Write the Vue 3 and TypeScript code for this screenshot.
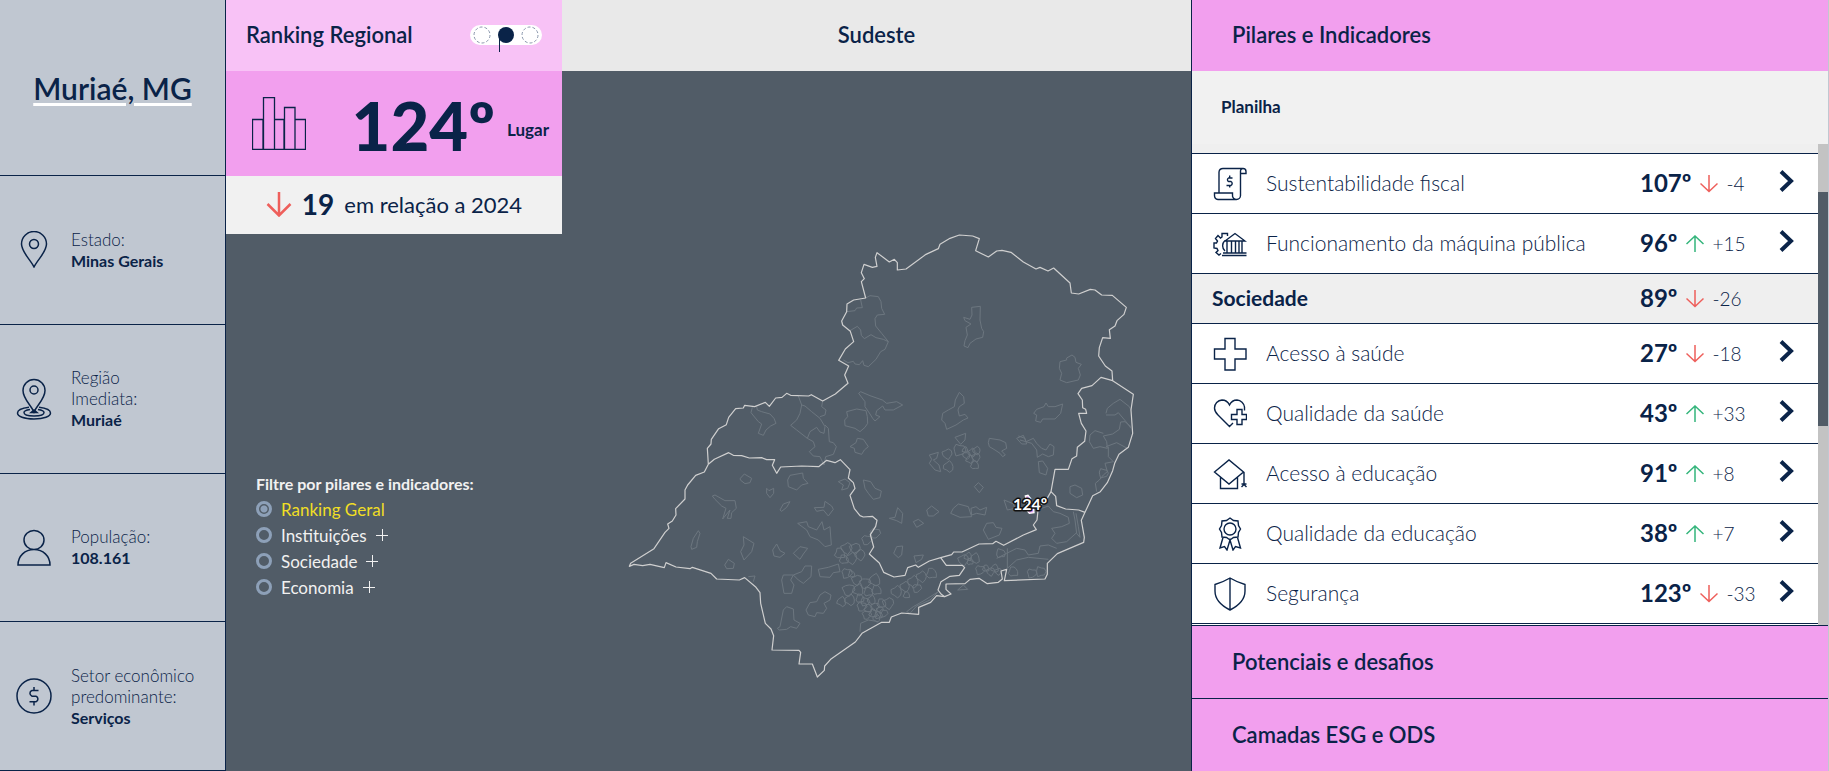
<script setup lang="ts">
import { ref } from 'vue'

interface Fact { icon: string; label: string; value: string }
interface Row { icon: string; label: string; rank: string; delta: number; group?: boolean }

const facts: Fact[] = [
  { icon: 'pin', label: 'Estado:', value: 'Minas Gerais' },
  { icon: 'region', label: 'Região\nImediata:', value: 'Muriaé' },
  { icon: 'person', label: 'População:', value: '108.161' },
  { icon: 'money', label: 'Setor econômico\npredominante:', value: 'Serviços' },
]

const rows: Row[] = [
  { icon: 'scroll', label: 'Sustentabilidade fiscal', rank: '107º', delta: -4 },
  { icon: 'machine', label: 'Funcionamento da máquina pública', rank: '96º', delta: 15 },
  { icon: '', label: 'Sociedade', rank: '89º', delta: -26, group: true },
  { icon: 'cross', label: 'Acesso à saúde', rank: '27º', delta: -18 },
  { icon: 'heart', label: 'Qualidade da saúde', rank: '43º', delta: 33 },
  { icon: 'cap', label: 'Acesso à educação', rank: '91º', delta: 8 },
  { icon: 'ribbon', label: 'Qualidade da educação', rank: '38º', delta: 7 },
  { icon: 'shield', label: 'Segurança', rank: '123º', delta: -33 },
]

const iconPaths: Record<string, string> = {
  pin: 'M18 36C14 28 5.500 21 5.500 13A12.500 12.500 0 0 1 30.500 13C30.500 21 22 28 18 36ZM18 8.500A4.500 4.500 0 1 0 18 17.500A4.500 4.500 0 1 0 18 8.500Z',
  person: 'M18 1.500A10 9.500 0 1 0 18 20.500A10 9.500 0 1 0 18 1.500ZM2 36C2 27 9 20.500 18 20.500S34 27 34 36Z',
  money: 'M18 1A17 17 0 1 0 18 35A17 17 0 1 0 18 1ZM22.500 12.500H16A3 3 0 0 0 16 18.200H20A3 3 0 0 1 20 23.800H13.500M18 9V12.500M18 23.800V27.500',
  scroll: 'M6 25.500V5A4 4 0 0 1 10 1.500H30A3 3 0 0 1 33 4.500V6.500H28M30 1.500A2.500 2.500 0 0 0 27.500 4V28.500A4 4 0 0 1 23.500 32.500H5A4 4 0 0 1 1.500 28.500V26H19.500V28A4 4 0 0 0 23.500 32.500M19.500 11H15.500A2 2 0 0 0 15.500 14.500H18A2.300 2.300 0 0 1 18 18.500H13.500M16.700 8.500V11M16.700 18.500V20.500',
  machine: 'M12 14L22 6.500L32 14ZM14 14V25.500M18.500 14V25.500M22.500 14V25.500M26 14V25.500M29 14V25.500M10 26H33.500M9 28.500H33.500M12 24A7 7 0 0 1 12 13.500M14.500 9V6.500H9V10L7.500 11L5 8.500L2.500 11.500L4.500 14L3.500 16H1V21L4 21.500L5 23.500L3 25.500L6 28L8 26.500',
  cross: 'M12 1.500H22V12H33V22H22V33H12V22H1.500V12H12Z',
  heart: 'M31.500 13.500V10A8 8 0 0 0 24 3C20.500 3 18 5 16.500 8C15 5 12.500 3 9 3A8 8 0 0 0 1.500 11C1.500 14 3 16 5 18L16.500 29.500L20 26M24 12.500H29V17.500H33.500V22.500H29V27.500H24V22.500H18.500V17.500H24Z',
  cap: 'M1.500 15L16 3L30.500 15L16 27ZM7.500 20V31.500H24.500V20M31 15V28M28.500 30L31 27.500L33.500 30M28.500 27H33.500',
  ribbon: 'M17 1L20.500 3.500L25 4L25.500 8.500L27.500 12L25.500 15.500L25 20L20.500 20.500L17 23L13.500 20.500L9 20L8.500 15.500L6.500 12L8.500 8.500L9 4L13.500 3.500ZM17 6A6 6 0 1 0 17 18A6 6 0 1 0 17 6ZM10 20.500L7 31L11.500 29.500L14 33L17 23L20 33L22.500 29.500L27.500 31L24.500 20.500',
  shield: 'M17 1C12 4 7 6 2 7.500V14C2 23 9 29 17 33C25 29 32 23 32 14V7.500C27 6 22 4 17 1ZM17 1V33',
}

const filters = [
  { name: 'Ranking Geral', expandable: false },
  { name: 'Instituições', expandable: true },
  { name: 'Sociedade', expandable: true },
  { name: 'Economia', expandable: true },
]
const selected = ref('Ranking Geral')

const signed = (n: number): string => (n > 0 ? '+' + n : String(n))

const states: string[] = [
  '265,733 262,685 273,672 274,658 296,626 319,614 326,592 347,566 370,564 374,556 404,560 436,547 448,559 467,534 486,532 500,520 512,526 566,528 574,524 608,543 646,522 684,490 674,465 686,438 656,421 676,387 701,365 691,334 668,315 665,303 680,275 681,252 701,240 737,234 724,185 733,176 724,158 732,133 757,142 771,139 766,112 771,98 808,126 823,118 832,128 832,150 858,147 918,103 955,86 960,73 990,55 1018,45 1058,48 1078,56 1067,92 1105,111 1130,93 1146,91 1173,97 1210,126 1248,147 1260,142 1284,153 1301,144 1350,189 1354,219 1376,222 1411,208 1425,210 1445,225 1477,226 1519,262 1512,283 1491,302 1485,318 1468,329 1471,355 1448,353 1438,383 1436,408 1456,438 1476,453 1478,482 1540,523 1533,570 1538,640 1525,682 1497,703 1484,730 1478,752 1462,788 1441,815 1418,827 1395,877 1384,901 1393,952 1391,967 1354,983 1312,1001 1282,1030 1282,1063 1275,1077 1153,1082 1160,1048 1143,1053 1147,1077 1135,1087 1102,1091 1077,1075 1050,1078 1035,1091 978,1092 978,1108 993,1122 974,1130 950,1127 932,1147 896,1162 896,1183 845,1179 814,1191 808,1207 785,1207 726,1240 706,1266 632,1318 614,1338 613,1351 592,1371 577,1332 537,1332 542,1297 537,1291 456,1290 461,1247 453,1227 436,1210 422,1150 420,1118 408,1102 374,1073 358,1080 290,1077 273,1060 217,1042 210,1046 168,1041 138,1028 133,1043 90,1033 68,1037 42,1033 28,1039 32,1030 102,986 135,937 147,925 143,912 157,903 168,885 167,866 195,837 195,810 203,795 227,766 253,756 265,733',
  '265,733 283,718 326,698 340,706 365,707 388,714 425,713 440,719 464,719 457,736 470,760 482,741 545,738 596,740 620,721 645,728 661,719 690,749 685,774 700,788 705,805 690,826 703,866 720,887 730,891 757,889 771,901 767,919 751,944 761,981 748,1002 778,1029 791,1057 822,1071 855,1066 863,1043 887,1035 895,1042 928,1023 962,1013 995,1004 1001,996 1026,996 1077,972 1118,971 1128,964 1151,976 1210,945 1249,929 1240,915 1251,900 1255,862 1278,841 1293,815 1305,748 1345,748 1356,716 1370,708 1372,682 1394,664 1398,633 1384,610 1376,580 1400,580 1397,568 1388,563 1387,540 1374,521 1385,505 1416,497 1443,472 1478,482',
  '1293,815 1307,829 1310,857 1337,867 1376,870 1395,877',
  '962,1013 979,1036 1027,1036 1034,1043 1018,1066 990,1069 963,1085 954,1110 964,1123 974,1130',
]

const towns: string[] = [
  '737,234 750,227 775,230 783,245 785,265 794,283 772,285 765,296 767,318 785,340 805,365 790,358 768,353 753,344 733,356 724,346 722,330 712,319 690,332',
  '680,275 705,272 710,264 727,263 722,240',
  '805,365 795,388 782,395 768,418 745,440 732,436 728,422 718,434 705,432 700,424 684,428 670,420',
  '1055,262 1081,259 1080,300 1085,325 1091,335 1088,352 1068,357 1050,370 1044,383 1032,378 1035,362 1042,345 1038,322 1053,312 1035,302 1031,292 1050,298 1056,285 1055,262',
  '1340,414 1356,405 1365,412 1368,427 1384,433 1375,445 1381,465 1375,480 1340,488 1320,480 1325,460 1318,445 1320,425 1340,420 1340,414',
  '716,520 722,515 750,527 787,540 800,550 830,545 848,555 820,570 795,570 788,558 770,572 767,585 780,590 765,603 758,595 750,582 735,560 735,545 716,520',
  '1018,517 1031,530 1033,550 1018,560 1014,570 1018,588 1035,583 1044,594 1030,600 1008,615 980,628 975,610 965,600 968,580 985,570 1003,560 1006,540 1018,517',
  '1250,568 1272,560 1278,549 1285,560 1305,560 1328,552 1322,580 1305,597 1268,597 1262,607 1247,603 1250,585 1241,580 1250,568',
  '680,575 710,567 738,572 742,590 743,610 735,622 720,635 705,625 675,617 674,600 683,590 680,575',
  '397,562 393,578 415,605 425,612 415,640 430,646 438,630 452,618 468,610 462,595 450,582 425,575 412,570 410,560',
  '535,528 545,555 540,580 530,600 512,616 530,630 562,655 570,635 590,622 600,636 612,640 615,620 600,595 575,575 555,558 545,555',
  '562,655 580,665 585,680 568,695 580,708 600,710 612,735 617,710 640,703 649,680 640,668 628,665 625,625 615,615',
  '608,543 605,560 618,570 615,585 600,590',
  '690,680 708,668 712,655 730,658 745,680 733,690 725,703 705,697 703,685 690,680',
  '1108,655 1140,660 1157,668 1160,685 1145,693 1156,705 1148,710 1140,700 1125,690 1108,680 1105,668 1108,655',
  '1195,648 1215,655 1220,672 1205,672 1190,655 1210,646 1218,665 1240,655 1250,670 1265,685 1278,690 1290,672 1302,680 1300,705 1285,710 1268,702 1252,712 1250,690 1235,670 1200,660',
  '1005,652 1037,640 1035,660 1022,673 1005,652',
  '928,705 955,697 950,715 940,720 957,735 962,755 945,750 928,730 935,718 928,705',
  '1458,580 1462,565 1480,550 1500,538 1528,560 1533,570',
  '1458,585 1485,585 1495,578 1518,605 1533,625',
  '1533,620 1515,605 1502,606 1498,628 1478,642 1450,648 1460,665 1462,685 1440,680 1420,685 1408,665 1410,645 1425,632 1450,640',
  '1458,680 1490,668 1522,685',
  '1465,680 1465,710 1480,725 1455,730 1462,755 1450,765 1438,780 1426,790 1430,815',
  '361,775 373,762 395,775 390,788 375,791 361,780 361,775',
  '277,828 285,825 315,842 345,842 349,865 335,878 333,895 322,895 330,870 308,897 318,865 305,858 285,838 277,828',
  '440,805 447,812 461,805 461,820 450,833 440,820 440,805',
  '480,870 490,852 510,845 500,862 485,874 480,870',
  '503,780 510,766 548,759 550,775 564,790 545,795 530,810 505,800 503,780',
  '583,863 612,862 615,844 635,858 640,868 625,888 610,870 590,874 583,863',
  '655,785 675,777 690,788 683,805 665,810 670,795 655,785',
  '730,780 752,785 765,805 784,813 780,833 760,838 745,820 735,805 730,780',
  '808,895 825,892 833,863 848,880 845,910 830,902 808,895',
  '880,905 895,898 911,910 890,922 880,905',
  '920,870 935,858 957,875 940,888 925,888 920,870',
  '992,880 1000,865 1015,852 1045,860 1055,890 1020,892 992,880',
  '1053,865 1068,860 1080,870 1100,862 1095,885 1070,880 1055,885 1053,865',
  '1063,800 1075,788 1090,802 1078,818 1063,800',
  '1152,840 1165,845 1180,852 1185,865 1162,870 1152,840',
  '1090,930 1100,910 1120,908 1128,922 1146,925 1138,945 1105,958 1090,930',
  '1255,725 1268,723 1283,745 1278,765 1258,758 1255,725',
  '1350,800 1365,795 1385,805 1388,825 1370,833 1350,820 1350,800',
  '213,980 220,955 235,932 240,940 232,965 230,982 215,988 213,980',
  '370,950 402,970 395,995 372,1020 362,995 372,975 370,950',
  '458,990 470,972 480,992 495,1000 480,1012 462,1008 458,990',
  '520,1000 540,980 563,985 550,1002 540,1018 520,1000',
  '533,910 560,905 565,920 590,930 606,905 612,930 630,920 634,975 615,980 595,960 570,950 560,930 533,910',
  '314,1035 325,1018 343,1030 340,1045 320,1046 314,1035',
  '385,1070 405,1068 400,1085',
  '485,1080 490,1065 520,1065 512,1080 522,1095 515,1120 492,1120 485,1080',
  '520,1065 545,1055 555,1038 575,1038 573,1070 550,1090 535,1080 520,1065',
  '558,1170 570,1148 590,1145 600,1125 615,1115 633,1125 630,1140 612,1150 620,1165 610,1180 590,1178 585,1190 565,1185 558,1170',
  '472,1225 480,1220 490,1170 500,1160 520,1167 522,1200 540,1210 530,1225 512,1220 500,1228 478,1230 472,1225',
  '821,1000 830,980 848,978 845,1005 835,1013 821,1000',
  '882,1008 910,1005 905,1018 888,1028 882,1008',
  '1265,865 1285,858 1300,875 1320,880 1345,892 1348,910 1325,920 1295,925 1305,940 1295,955 1310,970 1340,965 1370,938',
  '1360,875 1365,900 1370,940 1380,952 1375,920 1368,880',
  '595,1048 625,1042 655,1032 660,1055 640,1058 630,1072 600,1070 595,1048',
  '860,1175 880,1160 915,1140 955,1115 930,1140 890,1158 870,1180 860,1175',
  '1130,1015 1160,1000 1190,985 1215,990 1225,1005 1255,1000 1260,978 1285,975 1310,985',
  '1162,985 1162,1045 1190,1020 1225,1012 1285,1018',
  '720,1235 722,1210 745,1200 775,1205',
  '1013,1110 1030,1095 1043,1108 1013,1110',
]

/* Clusters of small municipalities: centre x, centre y, radius */
const clusters: number[][] = [
  [982, 702, 15], [986, 740, 16], [1018, 690, 18], [1040, 705, 12], [1056, 698, 12], [1070, 692, 12], [1050, 718, 12], [1068, 712, 13], [1064, 735, 13], [1036, 690, 9],
  [660, 1000, 16], [680, 985, 17], [705, 985, 16], [720, 1005, 16], [695, 1015, 17], [672, 1018, 14], [740, 960, 15], [765, 940, 15],
  [680, 1060, 15], [695, 1062, 10], [710, 1080, 15], [735, 1090, 16], [765, 1080, 18], [685, 1110, 18], [715, 1110, 17], [745, 1115, 14], [770, 1110, 15],
  [665, 1145, 14], [690, 1140, 16], [720, 1135, 13], [735, 1145, 13], [755, 1140, 13], [725, 1160, 14], [745, 1165, 12], [765, 1160, 12], [785, 1150, 14], [805, 1150, 17],
  [760, 1180, 13], [775, 1185, 12], [780, 1170, 10], [770, 1195, 11], [790, 1180, 12], [740, 1185, 13],
  [830, 1115, 17], [855, 1100, 15], [880, 1085, 17], [905, 1070, 16], [935, 1060, 16], [890, 1105, 13], [860, 1125, 10],
  [1030, 1020, 16], [1045, 1010, 12], [1066, 1015, 15], [1050, 1025, 10], [1080, 1050, 14], [1098, 1045, 10], [1112, 1055, 12], [1125, 1045, 12], [1135, 1055, 10],
  [1180, 1055, 15], [1235, 1060, 14], [1262, 1055, 15], [1142, 1000, 14], [1450, 760, 14],
]

const blob = (c: number[]): string => {
  const [cx = 0, cy = 0, r = 0] = c
  return Array.from({ length: 9 }, (_, i) => {
    const reach = r * (0.95 + 0.2 * Math.sin(cx * 3 + cy * 5 + i * 2.3))
    const angle = (i / 9) * Math.PI * 2
    return Math.round(cx + reach * Math.cos(angle)) + ',' + Math.round(cy + reach * Math.sin(angle))
  }).join(' ')
}
</script>

<template>
  <div class="page">
    <aside class="sidebar">
      <div class="city"><a href="#">Muriaé, MG</a></div>
      <div v-for="f in facts" :key="f.label" class="fact">
        <svg v-if="f.icon === 'region'" class="fact-icon" viewBox="0 0 36 42" aria-hidden="true">
          <path d="M18 34C15 27 7 21 7 12.500A11 11 0 0 1 29 12.500C29 21 21 27 18 34Z" />
          <circle cx="18" cy="12" r="4" />
          <path d="M13 29.200C6 30 1.500 32 1.500 35C1.500 38.500 8 41 18 41S34.500 38.500 34.500 35C34.500 32 30 30 23 29.200" />
          <path d="M14 31.500C10.500 32 8 33 8 34.500C8 37 12 38 18 38S28 37 28 34.500C28 33 25.500 32 22 31.500" />
          <path class="solid" d="M15 34.500L18 32L21 34.500Z" />
        </svg>
        <svg v-else class="fact-icon" viewBox="0 0 36 37" aria-hidden="true"><path :d="iconPaths[f.icon]" /></svg>
        <p>{{ f.label }}<strong>{{ f.value }}</strong></p>
      </div>
    </aside>

    <main class="center">
      <div class="overview">
        <section class="card">
          <header class="card-head">
            <h2>Ranking Regional</h2>
            <svg class="scope" viewBox="0 0 72 28" role="img" aria-label="Regional">
              <rect width="72" height="20" rx="10" />
              <circle class="stop" cx="12" cy="10" r="8" />
              <circle class="stop" cx="60" cy="10" r="8" />
              <circle class="current" cx="36" cy="10" r="8" />
              <path d="M29.500 10V27" />
            </svg>
          </header>
          <div class="card-body">
            <svg class="bars" viewBox="0 0 54 53" aria-hidden="true">
              <path d="M.5 52.500V22.500H11V52.500M11.500 52.500V.5H22.500V52.500M23 22.500H32V52.500M32.500 52.500V10.500H43V52.500M43.500 22.500H53.500V52.500M0 52.500H54" />
            </svg>
            <p class="place"><strong>124º</strong><span>Lugar</span></p>
          </div>
          <footer class="card-foot">
            <svg class="drop" viewBox="0 0 26 26" aria-hidden="true"><path d="M13 1V24.500M1.500 13L13 24.500L24.500 13" /></svg>
            <strong>19</strong>
            <span>em relação a 2024</span>
          </footer>
        </section>

        <fieldset class="filters">
          <legend>Filtre por pilares e indicadores:</legend>
          <label v-for="f in filters" :key="f.name" :class="{ on: selected === f.name }">
            <input v-model="selected" type="radio" name="pilar" :value="f.name" />
            <span>{{ f.name }}</span>
            <svg v-if="f.expandable" class="plus" viewBox="0 0 12 12" aria-hidden="true"><path d="M6.500 0V12M0 6.500H12" /></svg>
          </label>
        </fieldset>
      </div>

      <section class="region">
        <h2 class="region-head">Sudeste</h2>
        <svg class="map" viewBox="562 71 629 700" role="img" aria-label="Mapa do Sudeste">
          <g transform="translate(620 220) scale(.33333)">
            <g class="towns">
              <polyline v-for="(t, i) in towns" :key="i" :points="t" />
              <polygon v-for="(c, i) in clusters" :key="'c' + i" :points="blob(c)" />
            </g>
            <g class="states"><polyline v-for="(s, i) in states" :key="i" :points="s" /></g>
            <path class="chosen" d="M1216 828L1224 826L1232 836L1228 846L1240 856L1242 878L1228 880L1218 868L1222 852Z" />
          </g>
          <text x="1013" y="510">124º</text>
        </svg>
      </section>
    </main>

    <aside class="panel">
      <button class="tab" type="button">Pilares e Indicadores</button>
      <div class="sheet"><a href="#">Planilha</a></div>
      <div class="list-wrap">
        <ul class="list">
          <li v-for="r in rows" :key="r.label" :class="['row', { group: r.group }]">
            <svg v-if="!r.group" class="row-icon" viewBox="0 0 34 34" aria-hidden="true"><path :d="iconPaths[r.icon]" /></svg>
            <span class="label">{{ r.label }}</span>
            <span class="score">
              <strong>{{ r.rank }}</strong>
              <svg :class="['arrow', r.delta < 0 ? 'down' : 'up']" viewBox="0 0 18 18" aria-hidden="true">
                <path v-if="r.delta < 0" d="M9 0V16.500M.5 8.500L9 16.500L17.500 8.500" />
                <path v-else d="M9 17V1M.5 9L9 1L17.500 9" />
              </svg>
              <span class="delta">{{ signed(r.delta) }}</span>
            </span>
            <button v-if="!r.group" class="open" type="button" :aria-label="r.label">
              <svg viewBox="0 0 15 22" aria-hidden="true"><path d="M2 1.500L12 11L2 20.500" /></svg>
            </button>
          </li>
        </ul>
        <div class="track"><div class="thumb"></div></div>
      </div>
      <button class="tab lined" type="button">Potenciais e desafios</button>
      <button class="tab lined" type="button">Camadas ESG e ODS</button>
    </aside>
  </div>
</template>

<style>
body { background: #c0c7d1; }
</style>

<style scoped>
* { box-sizing: border-box; }
.page {
  --navy: #0a2348;
  --pink: #f29fee;
  --slate: #515c67;
  display: grid;
  grid-template-columns: 226fr 965fr 638fr;
  min-height: 100vh;
  font-family: Lato, "Noto Sans", sans-serif;
  color: var(--navy);
}
h2, p, ul { margin: 0; padding: 0; }
svg { display: block; flex: none; fill: none; }
button { font: inherit; color: inherit; border: 0; cursor: pointer; }

.sidebar {
  display: grid;
  grid-template-rows: 176px repeat(4, 1fr);
  background: #c0c7d1;
  border-right: 1px solid var(--navy);
}
.city, .fact { display: flex; align-items: center; border-bottom: 1px solid var(--navy); }
.city { justify-content: center; font-size: 30px; font-weight: 600; }
.city a {
  color: inherit;
  text-decoration: underline #fff 3px;
  text-underline-offset: 3px;
}
.fact { gap: 19px; padding: 0 16px; font-size: 17px; font-weight: 300; line-height: 21px; }
.fact p { white-space: pre-line; }
.fact strong { display: block; font-size: 16px; font-weight: 700; }
.fact-icon { width: 36px; stroke: var(--navy); stroke-width: 1.5; }
.solid { fill: var(--navy); }

.center { display: grid; grid-template-columns: 336px 1fr; background: var(--slate); }
.overview { display: flex; flex-direction: column; }
.card-head {
  display: flex; align-items: center; justify-content: space-between;
  height: 71px; padding: 0 20px; background: #f8c2f6;
}
.card-head h2 { padding-bottom: 2px; }
h2, .tab { font-size: 22px; font-weight: 600; }
.scope { width: 72px; height: 28px; margin-top: 7px; }
.scope rect { fill: #fff; }
.scope .stop { stroke: #8b98ad; stroke-dasharray: 3 2; }
.scope .current { fill: var(--navy); }
.scope path { stroke: var(--navy); }
.card-body {
  display: flex; align-items: center; justify-content: space-between;
  height: 105px; padding: 0 13px 0 26px; background: var(--pink);
}
.bars { width: 54px; height: 53px; stroke: var(--navy); stroke-width: 1.3; }
.place { display: flex; align-items: center; gap: 12px; padding-top: 2px; font-weight: 700; font-size: 17px; }
.place span { padding-top: 10px; }
.place strong { font-size: 67px; line-height: 80px; }
.card-foot {
  display: flex; align-items: center; justify-content: center; gap: 10px;
  height: 58px; padding-bottom: 2px; background: #f1f1f1; font-size: 22px;
}
.card-foot strong { font-size: 28px; }
.drop { width: 26px; height: 26px; stroke: #ee5f5b; stroke-width: 2.5; }

.filters { margin: auto 0 171px 30px; padding: 0; border: 0; color: #f1f1f1; font-size: 17px; }
.filters legend { padding: 0; font-size: 16px; font-weight: 700; line-height: 20px; margin-bottom: 2px; }
.filters label { display: flex; align-items: center; gap: 9px; height: 26px; }
.filters .on { color: #f0de25; }
.filters input {
  appearance: none; width: 16px; height: 16px; margin: 0;
  border: 3px solid #8da0b8; border-radius: 50%;
}
.filters input:checked { background: radial-gradient(circle, #8da0b8 3px, transparent 4px); }
.plus { width: 12px; height: 12px; stroke: #f1f1f1; }

.region { display: flex; flex-direction: column; min-width: 0; }
.region-head { height: 71px; line-height: 69px; text-align: center; background: #e9e9e9; }
.map { flex: 1 1 0; width: 100%; min-height: 0; }
.states { stroke: #cfcfcf; stroke-width: 3.6; stroke-linejoin: round; }
.towns { stroke: #6c7680; stroke-width: 3; stroke-linejoin: round; }
.chosen { fill: var(--pink); stroke: #fff; stroke-width: 4; }
.map text {
  font-size: 16px; font-weight: 700; fill: #fff;
  stroke: #111; stroke-width: 3px; stroke-linejoin: round; paint-order: stroke;
}

.panel {
  display: flex; flex-direction: column;
  border-left: 1px solid var(--navy); border-right: 1px solid #c0c7d1;
  background: #fff;
}
.tab { flex: none; height: 71px; padding: 0 40px 2px; text-align: left; background: var(--pink); }
.lined { height: 73px; border-top: 1px solid var(--navy); }
.sheet { flex: none; height: 73px; padding: 21px 29px 0; background: #f1f1f1; font-size: 17px; line-height: 30px; font-weight: 700; }
.sheet a { color: inherit; text-decoration: none; }
.list-wrap { flex: 1; display: flex; }
.list { flex: 1; list-style: none; padding-top: 9px; background: linear-gradient(#efefef 9px, #fff 9px); }
.row {
  display: grid; grid-template-columns: 34px 1fr 139px 15px; align-items: center;
  height: 60px; padding: 0 24px 0 21px; border-top: 1px solid var(--navy); background: #fff;
}
.row:last-child { height: 61px; border-bottom: 1px solid var(--navy); }
.row.group { grid-template-columns: 1fr 154px; height: 50px; padding-left: 20px; background: #efefef; }
.row-icon { width: 34px; height: 34px; stroke: var(--navy); stroke-width: 1.4; }
.label { padding: 0 0 2px 19px; font-size: 21px; font-weight: 300; white-space: nowrap; }
.group .label { padding-left: 0; font-weight: 700; }
.score { display: flex; align-items: center; padding-bottom: 2px; }
.score strong { font-size: 24px; font-weight: 700; }
.arrow { width: 18px; height: 18px; margin: 2px 8px 0 9px; stroke-width: 1.5; }
.down { stroke: #ee5f5b; }
.up { stroke: #35b57c; }
.delta { padding-top: 2px; font-size: 19px; font-weight: 300; }
.open { padding: 0 0 6px; background: none; }
.open svg { width: 15px; height: 22px; stroke: var(--navy); stroke-width: 4; }
.track { width: 10px; background: #c3c3c3; padding-top: 48px; }
.thumb { height: 234px; background: var(--slate); }
</style>
